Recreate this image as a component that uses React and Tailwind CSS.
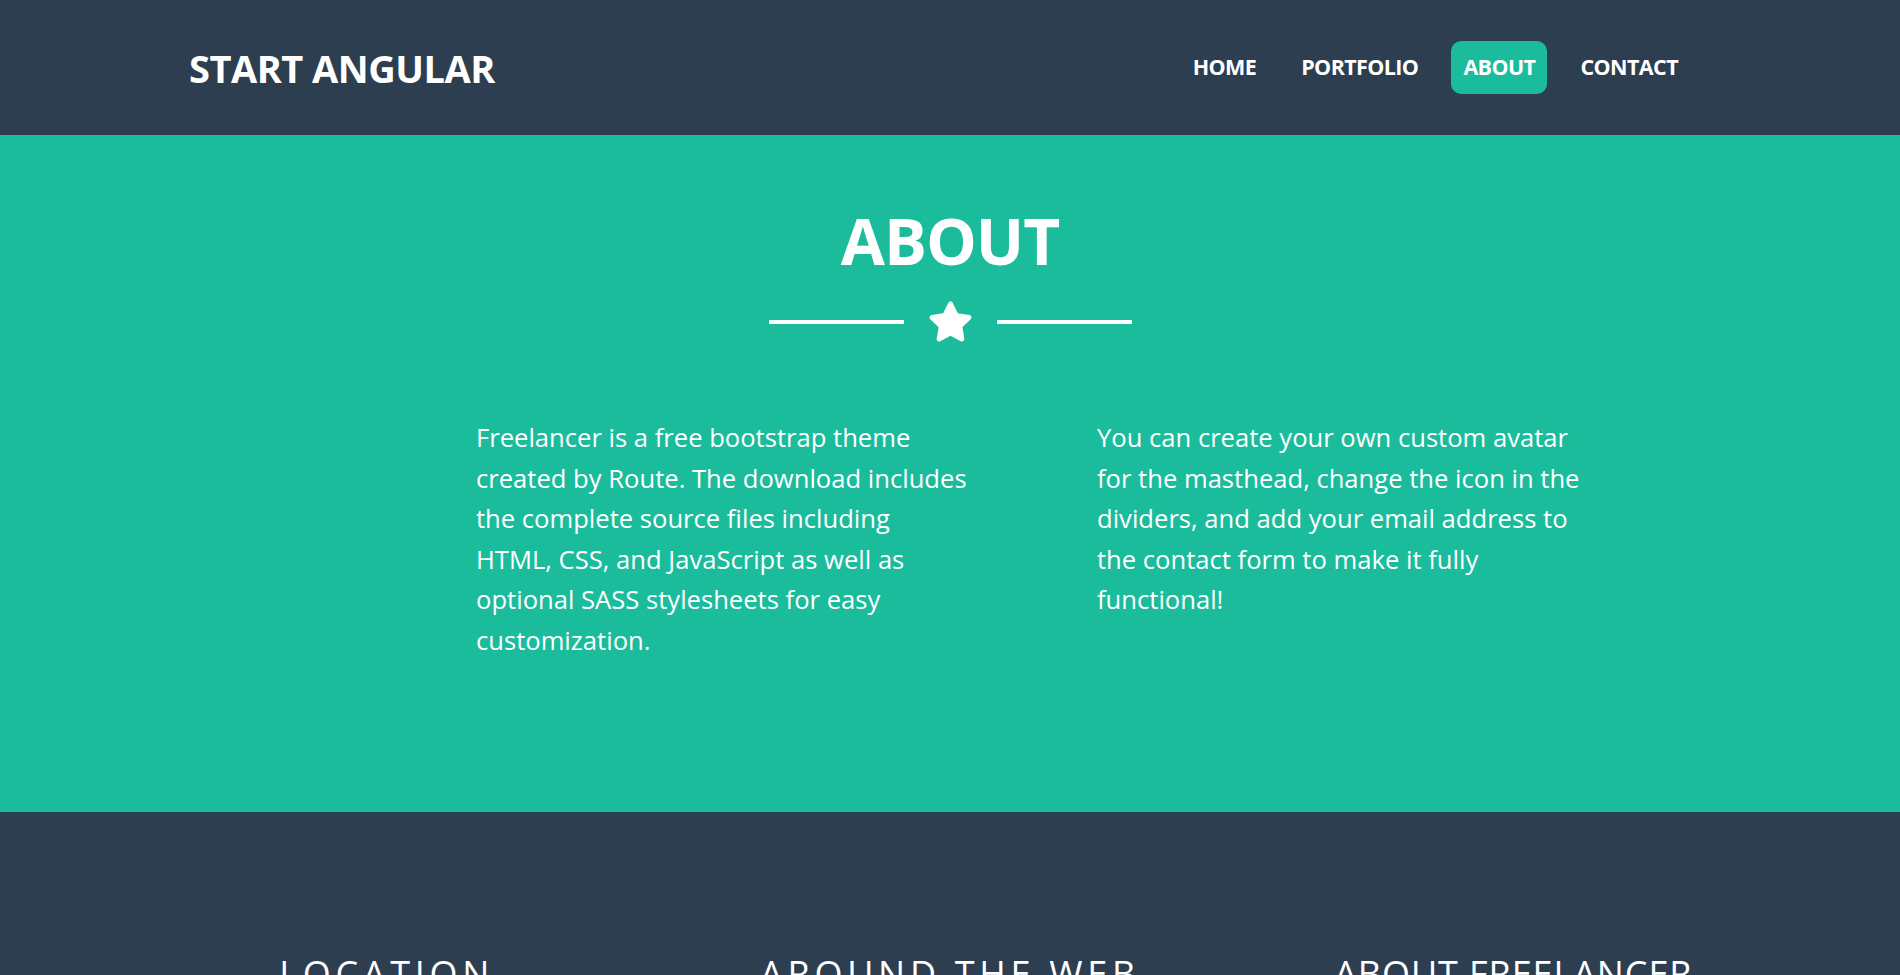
import { FaStar } from "react-icons/fa";

const navLinks = ["HOME", "PORTFOLIO", "ABOUT", "CONTACT"];

const footerCols = [
  { title: "LOCATION", spacing: "tracking-[4.7px]" },
  { title: "AROUND THE WEB", spacing: "tracking-[4.7px]" },
  { title: "ABOUT FREELANCER", spacing: "tracking-[0.9px]" }
];

export default function App() {
  return (
    <div className="min-h-screen bg-[#2c3e50] font-['Open_Sans',sans-serif] text-white">
      <nav className="flex h-[135px] items-center justify-between bg-[#2c3e50] pl-[189px] pr-[210px]">
        <a href="#" className="text-[38px] font-bold leading-none tracking-[-0.5px]">
          START ANGULAR
        </a>
        <ul className="flex items-center gap-[21px]">
          {navLinks.map((link) => (
            <li key={link}>
              <a
                href="#"
                className={`flex h-[53px] items-center rounded-[10px] px-[12px] text-[21.5px] font-bold tracking-[-0.6px] ${
                  link === "ABOUT" ? "bg-[#1abc9c]" : ""
                }`}
              >
                {link}
              </a>
            </li>
          ))}
        </ul>
      </nav>

      {/* about */}
      <section className="h-[677px] bg-[#1abc9c] pt-[66px]">
        <h2 className="text-center text-[64px] font-bold leading-[80px] tracking-[-1px]">ABOUT</h2>
        <div className="mt-[18px] flex items-center justify-center gap-[24px]">
          <div className="h-[4px] w-[135px] bg-white" />
          <FaStar className="h-[45px] w-[45px]" />
          <div className="h-[4px] w-[135px] bg-white" />
        </div>
        <div className="mt-[74px] flex pl-[476px] text-[25.6px] leading-[40.5px]">
          <p className="w-[493px]">
            Freelancer is a free bootstrap theme created by Route. The download includes the
            complete source files including HTML, CSS, and JavaScript as well as optional SASS
            stylesheets for easy customization.
          </p>
          <p className="ml-[128px] w-[493px]">
            You can create your own custom avatar for the masthead, change the icon in the
            dividers, and add your email address to the contact form to make it fully functional!
          </p>
        </div>
      </section>

      <footer className="bg-[#2c3e50] pt-[142px] pb-[80px]">
        <div className="mx-auto grid w-[1690px] grid-cols-3">
          {footerCols.map((col) => (
            <div key={col.title} className="text-center">
              <h4 className={`text-[36px] leading-[40px] ${col.spacing}`}>{col.title}</h4>
            </div>
          ))}
        </div>
      </footer>
    </div>
  );
}
